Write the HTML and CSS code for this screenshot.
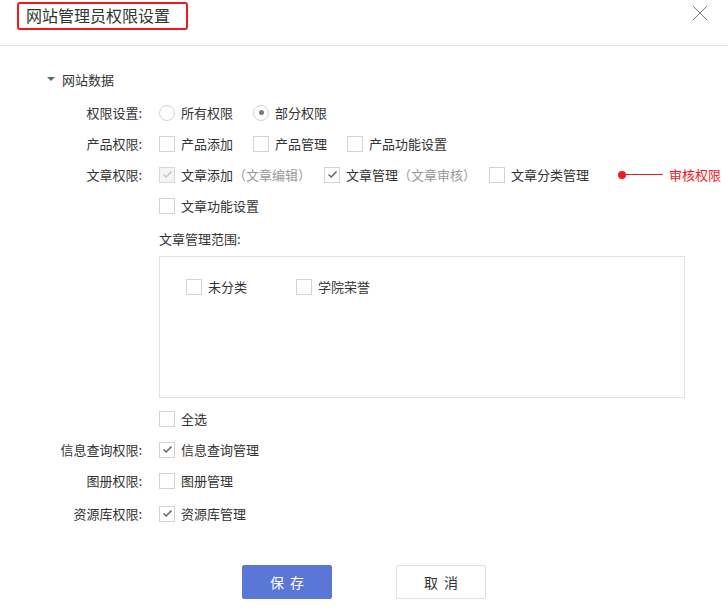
FILE: index.html
```html
<!DOCTYPE html>
<html lang="zh-CN">
<head>
<meta charset="utf-8">
<title>网站管理员权限设置</title>
<link rel="stylesheet" href="styles.css">
</head>
<body>
<div class="dialog">
  <div class="header">
    <div class="title">网站管理员权限设置</div>
    <div class="close">
      <svg width="16" height="16" viewBox="0 0 16 16"><path d="M1 1 L15 15 M15 1 L1 15" stroke="#777" stroke-width="1" fill="none"/></svg>
    </div>
  </div>

  <div class="content">
    <div class="section">
      <span class="caret"></span>
      <span>网站数据</span>
    </div>

    <div class="row">
      <div class="label">权限设置:</div>
      <div class="controls">
        <label class="opt"><span class="radio"></span>所有权限</label>
        <label class="opt"><span class="radio on"></span>部分权限</label>
      </div>
    </div>

    <div class="row">
      <div class="label">产品权限:</div>
      <div class="controls">
        <label class="opt"><span class="cb"></span>产品添加</label>
        <label class="opt"><span class="cb"></span>产品管理</label>
        <label class="opt"><span class="cb"></span>产品功能设置</label>
      </div>
    </div>

    <div class="row">
      <div class="label">文章权限:</div>
      <div class="controls">
        <label class="opt opt-note"><span class="cb checked disabled"><svg width="11" height="9" viewBox="0 0 11 9"><path d="M1.5 4.5 L4.2 7 L9.5 1.5" stroke="#c8c8c8" stroke-width="1.6" fill="none"/></svg></span>文章添加<span class="note">（文章编辑）</span></label>
        <label class="opt opt-note"><span class="cb checked"><svg width="11" height="9" viewBox="0 0 11 9"><path d="M1.5 4.5 L4.2 7 L9.5 1.5" stroke="#6a6a6a" stroke-width="1.6" fill="none"/></svg></span>文章管理<span class="note">（文章审核）</span></label>
        <label class="opt"><span class="cb"></span>文章分类管理</label>
        <div class="annot">
          <span class="dot"></span><span class="line"></span><span class="annot-text">审核权限</span>
        </div>
      </div>
    </div>

    <div class="row">
      <div class="label"></div>
      <div class="controls">
        <label class="opt"><span class="cb"></span>文章功能设置</label>
      </div>
    </div>

    <div class="row row-scope">
      <div class="label"></div>
      <div class="controls">文章管理范围:</div>
    </div>

    <div class="scope-box">
      <label class="opt opt-wide"><span class="cb"></span>未分类</label>
      <label class="opt opt-wide"><span class="cb"></span>学院荣誉</label>
    </div>

    <div class="row row-first">
      <div class="label"></div>
      <div class="controls">
        <label class="opt"><span class="cb"></span>全选</label>
      </div>
    </div>

    <div class="row">
      <div class="label">信息查询权限:</div>
      <div class="controls">
        <label class="opt"><span class="cb checked"><svg width="11" height="9" viewBox="0 0 11 9"><path d="M1.5 4.5 L4.2 7 L9.5 1.5" stroke="#6a6a6a" stroke-width="1.6" fill="none"/></svg></span>信息查询管理</label>
      </div>
    </div>

    <div class="row">
      <div class="label">图册权限:</div>
      <div class="controls">
        <label class="opt"><span class="cb"></span>图册管理</label>
      </div>
    </div>

    <div class="row row-last">
      <div class="label">资源库权限:</div>
      <div class="controls">
        <label class="opt"><span class="cb checked"><svg width="11" height="9" viewBox="0 0 11 9"><path d="M1.5 4.5 L4.2 7 L9.5 1.5" stroke="#6a6a6a" stroke-width="1.6" fill="none"/></svg></span>资源库管理</label>
      </div>
    </div>

    <div class="footer">
      <button class="btn btn-primary">保存</button>
      <button class="btn btn-default">取消</button>
    </div>
  </div>
</div>
</body>
</html>
```

FILE: styles.css
```css
html, body {
  margin: 0;
  padding: 0;
  background: #fff;
}

body {
  font-family: "Noto Sans CJK SC", "Noto Sans", "Liberation Sans", sans-serif;
  font-size: 13px;
  color: #333;
}

.dialog {
  width: 728px;
  height: 613px;
  overflow: hidden;
}

.header {
  height: 45px;
  border-bottom: 1px solid #e5e5e5;
  display: flex;
  justify-content: space-between;
  align-items: flex-start;
}

.title {
  margin: 2px 0 0 17px;
  width: 171px;
  height: 28px;
  box-sizing: border-box;
  border: 2px solid #f01a1a;
  border-radius: 3px;
  padding-left: 7px;
  font-size: 16px;
  line-height: 23px;
  color: #333;
}

.close {
  margin: 5px 20px 0 0;
  width: 16px;
  height: 16px;
}

.close svg {
  display: block;
}

.content {
  padding-top: 18px;
}

.section {
  height: 30px;
  margin-bottom: 3px;
  display: flex;
  align-items: center;
  padding-left: 47px;
}

.caret {
  width: 0;
  height: 0;
  border-left: 4px solid transparent;
  border-right: 4px solid transparent;
  border-top: 4px solid #666;
  margin-right: 7px;
}

.row {
  display: flex;
  align-items: center;
  height: 31px;
}

.row-scope {
  height: 35px;
}

.row-first {
  margin-top: 5px;
}

.row-last {
  margin-top: 2px;
}

.label {
  flex: none;
  width: 142px;
  margin-right: 17px;
  text-align: right;
  white-space: nowrap;
}

.controls {
  display: flex;
  align-items: center;
  white-space: nowrap;
}

.opt {
  display: flex;
  align-items: center;
  margin-right: 20px;
}

.opt-note {
  margin-right: 13px;
}

.opt-wide {
  margin-right: 49px;
}

.note {
  color: #9a9a9a;
}

.cb {
  width: 16px;
  height: 16px;
  box-sizing: border-box;
  border: 1px solid #d3d3d3;
  background: #fff;
  margin-right: 6px;
  display: flex;
  align-items: center;
  justify-content: center;
  flex: none;
}

.cb.disabled {
  background: #f4f4f4;
  border-color: #d8d8d8;
}

.cb svg {
  display: block;
}

.radio {
  width: 16px;
  height: 16px;
  box-sizing: border-box;
  border: 1px solid #d3d3d3;
  border-radius: 50%;
  background: #fff;
  margin-right: 6px;
  display: flex;
  align-items: center;
  justify-content: center;
  flex: none;
}

.radio.on::after {
  content: "";
  width: 5px;
  height: 5px;
  border-radius: 50%;
  background: #7a7a7a;
}

.annot {
  display: flex;
  align-items: center;
  margin-left: 9px;
  color: #f0191d;
}

.dot {
  width: 8px;
  height: 8px;
  border-radius: 50%;
  background: #f0191d;
}

.line {
  width: 37px;
  height: 1px;
  background: #f0191d;
  margin-right: 6px;
}

.scope-box {
  margin-left: 159px;
  width: 526px;
  height: 142px;
  box-sizing: border-box;
  border: 1px solid #e2e2e2;
  padding: 20px 0 0 26px;
  display: flex;
  align-items: flex-start;
}

.footer {
  margin-top: 36px;
  padding-left: 242px;
  display: flex;
  gap: 64px;
}

.btn {
  width: 90px;
  height: 34px;
  box-sizing: border-box;
  border-radius: 2px;
  font-family: "Noto Sans CJK SC", "Noto Sans", sans-serif;
  font-size: 14px;
  letter-spacing: 6px;
  padding: 0 0 0 6px;
  cursor: pointer;
}

.btn-primary {
  background: #5a77d8;
  border: 1px solid #5a77d8;
  color: #fff;
}

.btn-default {
  background: #fff;
  border: 1px solid #dcdfe6;
  color: #333;
}
```
